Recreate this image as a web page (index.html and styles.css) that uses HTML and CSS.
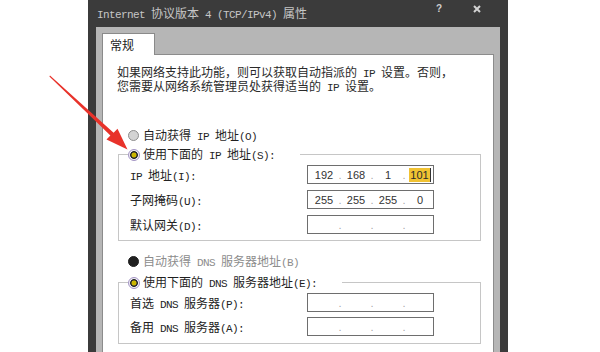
FILE: index.html
```html
<!DOCTYPE html>
<html lang="zh-CN">
<head>
<meta charset="utf-8">
<title>Internet 协议版本 4 (TCP/IPv4) 属性</title>
<link rel="stylesheet" href="styles.css">
</head>
<body>
<div class="window">
  <div class="titlebar">
    <span class="title"><span class="en">Internet </span>协议版本<span class="en"> 4 (TCP/IPv4) </span>属性</span>
    <span class="tb-help">?</span>
    <span class="tb-close"><svg width="8" height="8" viewBox="0 0 8 8"><path d="M1 1 L7 7 M7 1 L1 7" stroke="#d2d2d2" stroke-width="2"/></svg></span>
  </div>
  <div class="client">
    <div class="tabs"><div class="tab">常规</div></div>
    <div class="panel">
      <p class="intro">如果网络支持此功能，则可以获取自动指派的<span class="en"> IP </span>设置。否则，<br>您需要从网络系统管理员处获得适当的<span class="en"> IP </span>设置。</p>

      <div class="radio-row first"><span class="radio"></span><span class="txt">自动获得<span class="en"> IP </span>地址<span class="en">(O)</span></span></div>

      <fieldset class="group">
        <legend class="radio-row"><span class="radio checked"></span><span class="txt">使用下面的<span class="en"> IP </span>地址<span class="en">(S):</span></span></legend>
        <div class="field-grid">
          <span class="label"><span class="txt"><span class="en">IP </span>地址<span class="en">(I):</span></span></span>
          <div class="ipbox"><span class="seg">192</span><span class="dot">.</span><span class="seg">168</span><span class="dot">.</span><span class="seg">1</span><span class="dot">.</span><span class="seg"><span class="sel">101</span><span class="caret"></span></span></div>
          <span class="label"><span class="txt">子网掩码<span class="en">(U):</span></span></span>
          <div class="ipbox"><span class="seg">255</span><span class="dot">.</span><span class="seg">255</span><span class="dot">.</span><span class="seg">255</span><span class="dot">.</span><span class="seg">0</span></div>
          <span class="label"><span class="txt">默认网关<span class="en">(D):</span></span></span>
          <div class="ipbox"><span class="seg"></span><span class="dot">.</span><span class="seg"></span><span class="dot">.</span><span class="seg"></span><span class="dot">.</span><span class="seg"></span></div>
        </div>
      </fieldset>

      <div class="radio-row disabled"><span class="radio filled"></span><span class="txt">自动获得<span class="en"> DNS </span>服务器地址<span class="en">(B)</span></span></div>

      <fieldset class="group dns">
        <legend class="radio-row"><span class="radio checked"></span><span class="txt">使用下面的<span class="en"> DNS </span>服务器地址<span class="en">(E):</span></span></legend>
        <div class="field-grid tight">
          <span class="label"><span class="txt">首选<span class="en"> DNS </span>服务器<span class="en">(P):</span></span></span>
          <div class="ipbox"><span class="seg"></span><span class="dot">.</span><span class="seg"></span><span class="dot">.</span><span class="seg"></span><span class="dot">.</span><span class="seg"></span></div>
          <span class="label"><span class="txt">备用<span class="en"> DNS </span>服务器<span class="en">(A):</span></span></span>
          <div class="ipbox"><span class="seg"></span><span class="dot">.</span><span class="seg"></span><span class="dot">.</span><span class="seg"></span><span class="dot">.</span><span class="seg"></span></div>
        </div>
      </fieldset>
    </div>
  </div>
</div>
<svg class="arrow" width="600" height="352" viewBox="0 0 600 352">
  <path d="M50 75.6 L113.6 132.8 L117.5 128.8 L127.5 149.5 L106.5 139.4 L110.4 135.6 L49.4 76.4 Z" fill="#e8322a"/>
</svg>
</body>
</html>
```
FILE: styles.css
```css
* { box-sizing: border-box; }

body {
  margin: 0;
  width: 600px;
  height: 352px;
  overflow: hidden;
  position: relative;
  background: #ffffff;
  font-family: "Noto Sans CJK SC", "Noto Sans", sans-serif;
  font-size: 12px;
  color: #1f1f1f;
}

.en {
  font-family: "Liberation Mono", monospace;
  font-size: 11px;
  letter-spacing: -0.6px;
}

.txt {
  white-space: pre;
}

.window {
  margin-left: 88px;
  width: 420px;
  height: 352px;
  background: #3b3b3b;
  display: flex;
  flex-direction: column;
}

.titlebar {
  height: 27px;
  flex: none;
  display: flex;
  align-items: center;
  padding-left: 9px;
  color: #c6c6c6;
  line-height: 27px;
}

.tb-help {
  margin-left: auto;
  align-self: flex-start;
  margin-top: 3px;
  width: 10px;
  text-align: center;
  font-family: "Liberation Sans", sans-serif;
  font-weight: bold;
  font-size: 10px;
  line-height: 12px;
  color: #cfcfcf;
}

.tb-close {
  align-self: flex-start;
  margin-top: 5px;
  margin-left: 26px;
  margin-right: 24px;
  width: 14px;
  height: 9px;
  display: flex;
  justify-content: center;
}

.client {
  flex: 1;
  margin: 0 8px;
  background: #b6b6b6;
  padding: 6px 6px 0 6px;
  display: flex;
  flex-direction: column;
}

.tabs {
  display: flex;
  height: 22px;
  margin-bottom: -1px;
  position: relative;
  z-index: 1;
}

.tab {
  width: 53px;
  height: 22px;
  background: #ffffff;
  border: 1px solid #8a8a8a;
  border-bottom: none;
  padding-left: 7px;
  line-height: 21px;
  color: #1a1a1a;
}

.panel {
  flex: 1;
  background: #ffffff;
  border: 1px solid #8c8c8c;
  border-bottom: none;
  padding: 11px 0 0 14px;
}

.intro {
  margin: 0;
  line-height: 12px;
  color: #2a2a2a;
}

.radio-row {
  display: flex;
  align-items: center;
  height: 19px;
  line-height: 19px;
  white-space: nowrap;
}

.radio-row.first {
  margin-top: 32px;
  margin-left: 11px;
}

.radio-row.disabled {
  margin-top: 11px;
  margin-left: 11px;
  color: #8c8c8c;
}

.radio {
  width: 11px;
  height: 11px;
  border-radius: 50%;
  border: 1px solid #8e8e8e;
  background: #d3d3d3;
  margin-right: 4px;
  flex: none;
}

.radio.checked {
  width: 12px;
  height: 12px;
  margin-right: 3px;
  border: 1px solid #a394c4;
  background: radial-gradient(circle, #cbb600 0, #cbb600 2.2px, #2e2e2e 2.8px, #2e2e2e 3.6px, #f0eef5 4.2px);
}

.radio.filled {
  background: #202020;
  border-color: #202020;
}

.group {
  margin: 0 0 0 1px;
  width: 363px;
  min-width: 0;
  border: 1px solid #c6c6c6;
  padding: 1px 0 6px 8px;
}

.group.dns {
  margin-top: 2px;
  padding-bottom: 7px;
}

.group legend {
  padding: 0 25px 0 0;
  margin-left: 1px;
}

.field-grid {
  display: grid;
  grid-template-columns: 177px 127px;
  grid-auto-rows: 19px;
  row-gap: 6px;
  padding-left: 3px;
}

.field-grid.tight {
  row-gap: 5px;
}

.label {
  display: flex;
  align-items: center;
  white-space: nowrap;
  color: #222;
}

.ipbox {
  height: 19px;
  border: 1px solid #6e6e6e;
  display: flex;
  align-items: center;
  padding-left: 3px;
  font-family: "Liberation Sans", sans-serif;
  font-size: 11px;
  color: #333;
}

.seg {
  width: 26px;
  text-align: center;
  display: flex;
  justify-content: center;
  align-items: center;
}

.dot {
  width: 6px;
  text-align: center;
  color: #a8a8a8;
}

.sel {
  background: #f1c232;
  color: #2a2a2a;
  line-height: 14px;
  padding: 0 1px;
}

.caret {
  width: 1px;
  height: 14px;
  background: #333;
}

.arrow {
  position: absolute;
  left: 0;
  top: 0;
  pointer-events: none;
}
```
